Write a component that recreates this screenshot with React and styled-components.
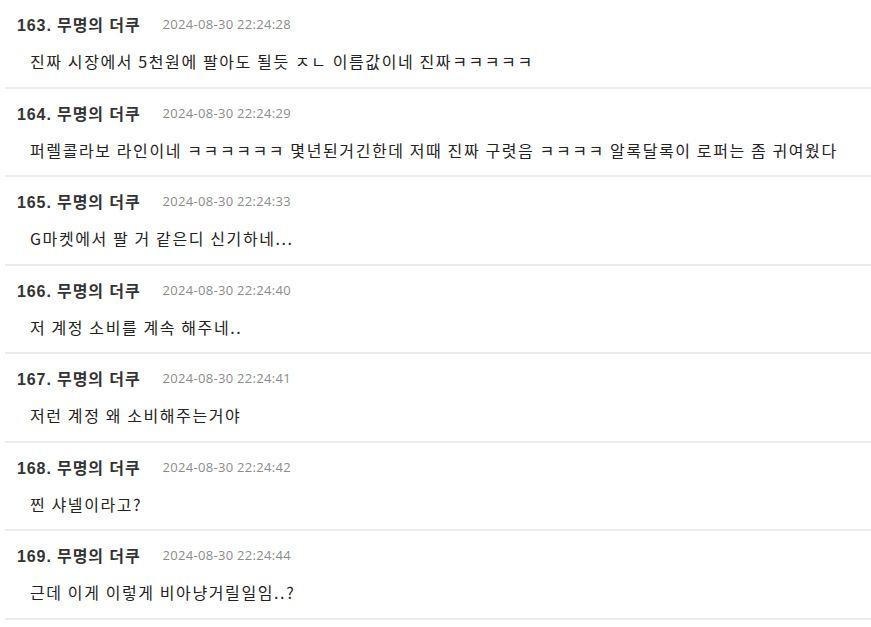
import styled, { createGlobalStyle } from 'styled-components';

const GlobalStyle = createGlobalStyle`
  body {
    margin: 0;
    background: #fff;
    font-family: "Liberation Sans", "Noto Sans CJK KR", sans-serif;
  }
`;

const List = styled.ul`
  list-style: none;
  margin: 0 0 0 5px;
  padding: 0;
`;

const Item = styled.li`
  padding: 12px 0 13.5px 12px;
  border-bottom: 2px solid #ececec;
`;

const Header = styled.div`
  display: flex;
  align-items: center;
  gap: 22px;
  height: 24px;
`;

const Author = styled.span`
  font-size: 16px;
  font-weight: 700;
  letter-spacing: 0.9px;
  color: #333;
`;

const Date = styled.span`
  font-family: "Open Sans", "Liberation Sans", sans-serif;
  font-size: 13px;
  letter-spacing: 0.3px;
  color: #8c8c8c;
`;

const Content = styled.p`
  margin: 13px 0 0;
  padding-left: 13px;
  font-family: "Noto Sans CJK KR", sans-serif;
  font-size: 16px;
  line-height: 24px;
  letter-spacing: 1.6px;
  color: #222;
`;

const comments = [
  { no: 163, time: '22:24:28', text: '진짜 시장에서 5천원에 팔아도 될듯 ㅈㄴ 이름값이네 진짜ㅋㅋㅋㅋㅋ' },
  { no: 164, time: '22:24:29', text: '퍼렐콜라보 라인이네 ㅋㅋㅋㅋㅋㅋ 몇년된거긴한데 저때 진짜 구렷음 ㅋㅋㅋㅋ 알록달록이 로퍼는 좀 귀여웠다' },
  { no: 165, time: '22:24:33', text: 'G마켓에서 팔 거 같은디 신기하네...' },
  { no: 166, time: '22:24:40', text: '저 계정 소비를 계속 해주네..' },
  { no: 167, time: '22:24:41', text: '저런 계정 왜 소비해주는거야' },
  { no: 168, time: '22:24:42', text: '찐 샤넬이라고?' },
  { no: 169, time: '22:24:44', text: '근데 이게 이렇게 비아냥거릴일임..?' },
];

const App = () => (
  <>
    <GlobalStyle />
    <List>
      {comments.map(c => (
        <Item key={c.no}>
          <Header>
            <Author>{c.no}. 무명의 더쿠</Author>
            <Date>2024-08-30 {c.time}</Date>
          </Header>
          <Content>{c.text}</Content>
        </Item>
      ))}
    </List>
  </>
);

export default App;
